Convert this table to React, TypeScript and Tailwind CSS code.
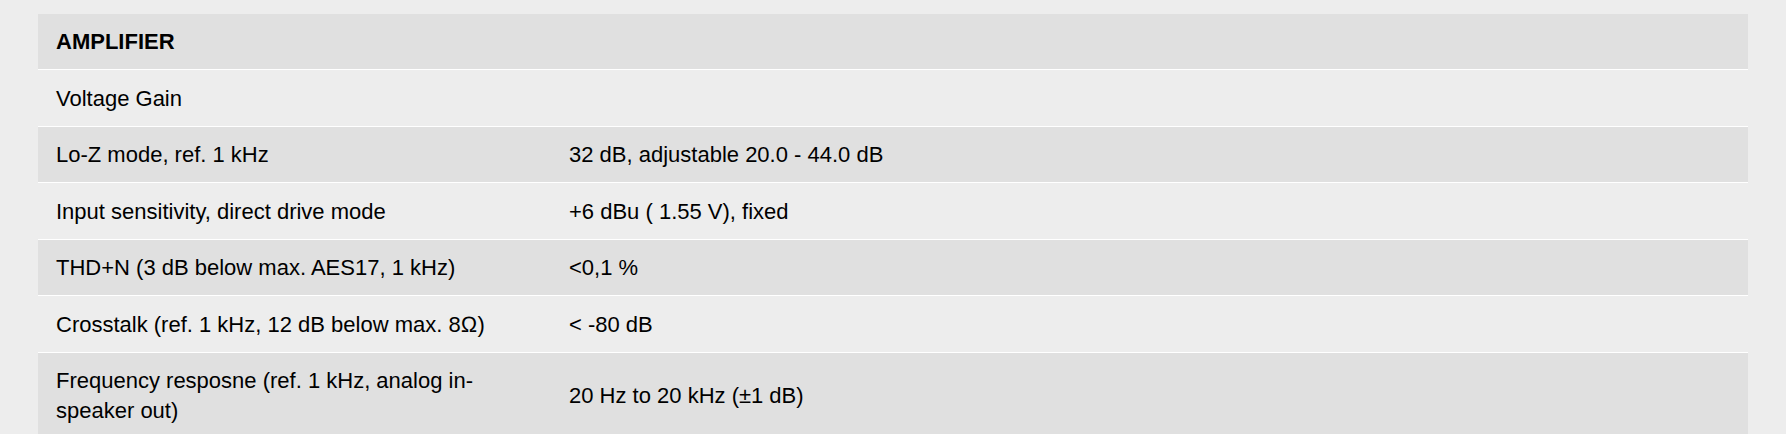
import React from 'react';

type Spec = { label: string; value?: string };

const specs: Spec[] = [
    { label: 'Voltage Gain' },
    { label: 'Lo-Z mode, ref. 1 kHz', value: '32 dB, adjustable 20.0 - 44.0 dB' },
    { label: 'Input sensitivity, direct drive mode', value: '+6 dBu ( 1.55 V), fixed' },
    { label: 'THD+N (3 dB below max. AES17, 1 kHz)', value: '<0,1 %' },
    { label: 'Crosstalk (ref. 1 kHz, 12 dB below max. 8\u2126)', value: '< -80 dB' },
    { label: 'Frequency resposne (ref. 1 kHz, analog in-speaker out)', value: '20 Hz to 20 kHz (\u00b11 dB)' },
];

export default function App() {
    return (
        <div
            className="min-h-screen w-full bg-[#ededed] px-[38px] pt-[14px] text-[22px] leading-[30px] text-black"
            style={{ fontFamily: '"Liberation Sans", Arial, sans-serif' }}
        >
            <div className="w-full">
                {/* header */}
                <div className="flex h-[56px] items-center border-b border-white bg-[#e0e0e0] px-[18px] pt-[1px]">
                    <span className="font-bold uppercase">Amplifier</span>
                </div>
                {specs.map((row, i) => (
                    <div
                        key={row.label}
                        className={`flex border-b border-white ${i % 2 === 0 ? 'bg-[#ededed]' : 'bg-[#e0e0e0]'}`}
                    >
                        <div className="w-[30%] shrink-0 px-[18px] pt-[13.75px] pb-[11.75px]">{row.label}</div>
                        <div className="flex flex-1 items-center px-[18px] pt-[13.75px] pb-[11.75px]">{row.value}</div>
                    </div>
                ))}
            </div>
        </div>
    );
}
